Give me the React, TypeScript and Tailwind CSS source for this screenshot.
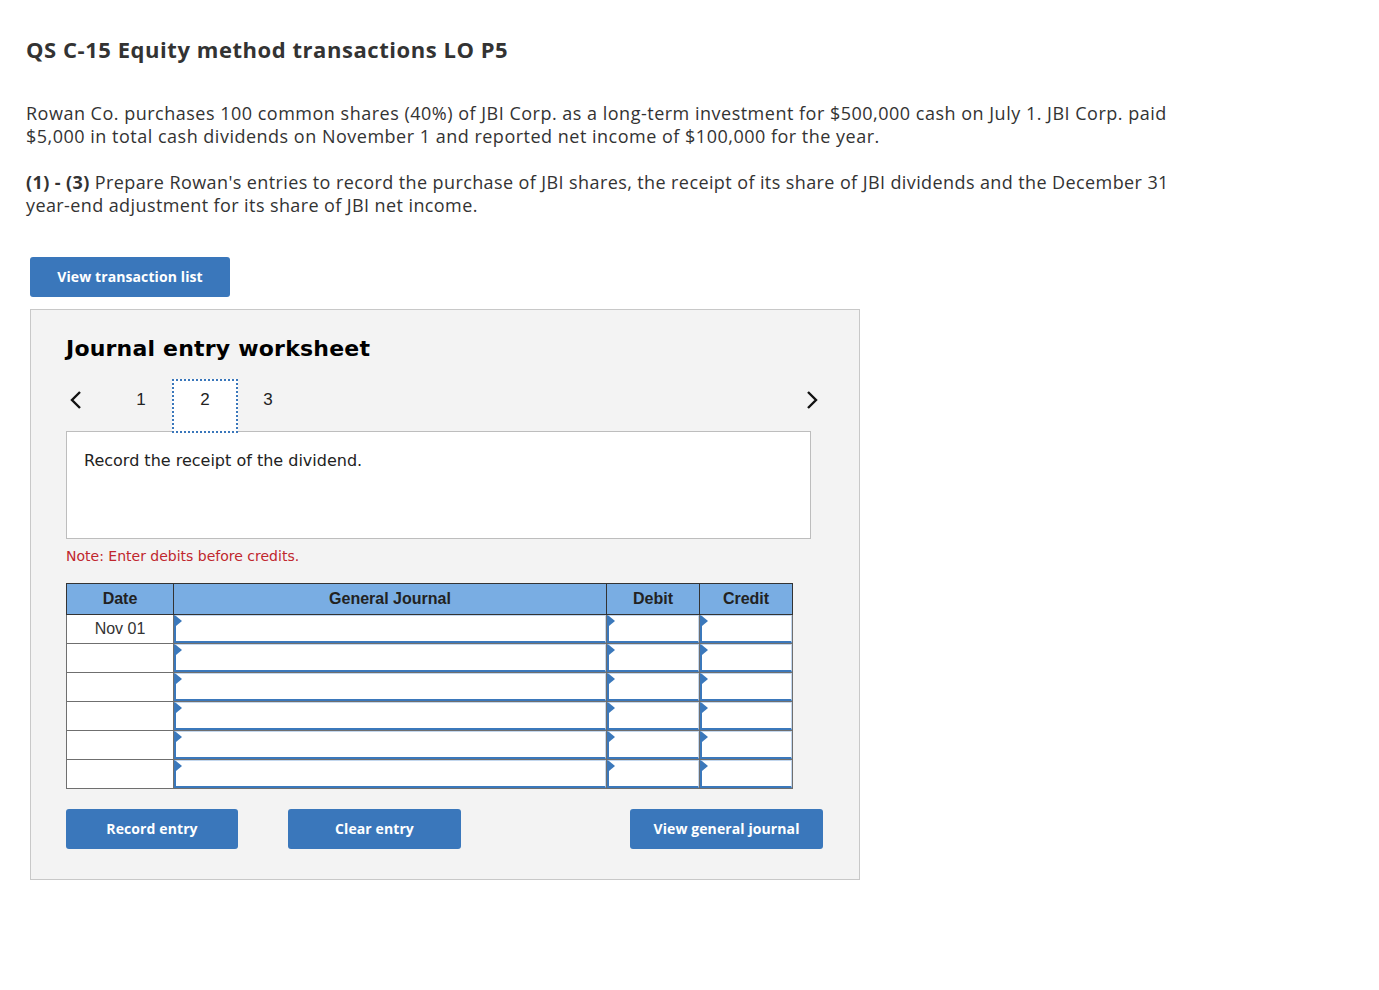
import React from "react";

const rows = ["Nov 01", "", "", "", "", ""];

function InputCell({ w }: { w: string }) {
  return (
    <td className={`${w} border border-[#6f6f6f] p-0 h-[29px] bg-white`}>
      <div className="relative h-full w-full border-l-2 border-b-2 border-[#3b78bb] border-t border-r border-t-[#c3d7ee] border-r-[#c3d7ee] bg-white">
        <span className="absolute left-0 top-0 w-0 h-0 border-t-[5px] border-b-[5px] border-l-[6px] border-t-transparent border-b-transparent border-l-[#3b78bb]" />
      </div>
    </td>
  );
}

export default function App() {
  return (
    <div className="bg-white min-h-[990px] w-[1379px] text-[#222]">
      <div className="pl-[26px] pt-[35px]">
        <h1 className="text-[22px] leading-[28px] font-bold text-[#333] font-['Open_Sans',sans-serif] tracking-[0.55px]">
          QS C-15 Equity method transactions LO P5
        </h1>
        <p className="mt-[39px] text-[18px] leading-[23px] text-[#333] font-['Open_Sans',sans-serif] tracking-[0.5px] w-[1300px]">
          Rowan Co. purchases 100 common shares (40%) of JBI Corp. as a long-term investment for $500,000 cash on July 1. JBI Corp. paid
          <br />
          $5,000 in total cash dividends on November 1 and reported net income of $100,000 for the year.
        </p>
        <p className="mt-[23px] text-[18px] leading-[23px] text-[#333] font-['Open_Sans',sans-serif] tracking-[0.4px] w-[1300px]">
          <span className="font-bold">(1) - (3)</span> Prepare Rowan's entries to record the purchase of JBI shares, the receipt of its share of JBI dividends and the December 31
          <br />
          year-end adjustment for its share of JBI net income.
        </p>
      </div>

      <div className="pl-[30px]">
        <button className="mt-[40px] w-[200px] h-[40px] rounded-[3px] bg-[#3a77bb] text-white text-[14px] leading-[20px] pb-[1px] font-bold font-['Open_Sans',sans-serif] tracking-[0.1px]">
          View transaction list
        </button>

        <div className="mt-[12px] w-[830px] h-[571px] bg-[#f3f3f3] border border-[#c8c8c8] pl-[35px] pt-[25px]">
          <h2 className="text-[22px] leading-[28px] font-bold text-black font-['DejaVu_Sans',sans-serif] tracking-[0.2px]">
            Journal entry worksheet
          </h2>

          <div className="mt-[16px] flex items-start w-[745px] h-[54px] relative z-10 font-['Liberation_Sans',sans-serif] text-[17px] leading-[22px] text-[#222]">
            <svg width="14" height="22" viewBox="0 0 14 22" className="ml-[3px] mt-[10px]">
              <path d="M11 3 L3 11 L11 19" stroke="#111" strokeWidth="2.4" fill="none" />
            </svg>
            <span className="ml-[48px] mt-[10px] w-[20px] text-center">1</span>
            <div className="ml-[21px] w-[66px] h-[54px] bg-white border-2 border-dotted border-[#3a77bb] flex justify-center pt-[8px]">
              2
            </div>
            <span className="ml-[20px] mt-[10px] w-[20px] text-center">3</span>
            <svg width="14" height="22" viewBox="0 0 14 22" className="ml-auto mr-[-8px] mt-[10px]">
              <path d="M3 3 L11 11 L3 19" stroke="#111" strokeWidth="2.4" fill="none" />
            </svg>
          </div>

          <div className="mt-[-2px] w-[745px] h-[108px] bg-white border border-[#bdbdbd] pl-[17px] pt-[19px] text-[16px] leading-[20px] font-['DejaVu_Sans',sans-serif] text-[#222]">
            Record the receipt of the dividend.
          </div>

          <p className="mt-[8px] text-[14px] leading-[18px] text-[#c0262d] font-['DejaVu_Sans',sans-serif]">
            Note: Enter debits before credits.
          </p>

          <table className="mt-[18px] border-collapse font-['Liberation_Sans',sans-serif] text-[16px]">
            <thead>
              <tr className="bg-[#79ade3] h-[31px]">
                <th className="w-[107px] border border-[#333] font-bold text-[#222] p-0">Date</th>
                <th className="w-[433px] border border-[#333] font-bold text-[#222] p-0">General Journal</th>
                <th className="w-[93px] border border-[#333] font-bold text-[#222] p-0">Debit</th>
                <th className="w-[93px] border border-[#333] font-bold text-[#222] p-0">Credit</th>
              </tr>
            </thead>
            <tbody>
              {rows.map((d, i) => (
                <tr key={i} className="h-[29px]">
                  <td className="w-[107px] border border-[#6f6f6f] bg-white text-center text-[16px] text-[#333] p-0">{d}</td>
                  <InputCell w="w-[433px]" />
                  <InputCell w="w-[93px]" />
                  <InputCell w="w-[93px]" />
                </tr>
              ))}
            </tbody>
          </table>

          <div className="mt-[20px] flex font-['Open_Sans',sans-serif] text-[14px] leading-[20px] font-bold text-white tracking-[0.1px]">
            <button className="w-[172px] h-[40px] rounded-[3px] bg-[#3a77bb] pb-[1px]">Record entry</button>
            <button className="ml-[50px] w-[173px] h-[40px] rounded-[3px] bg-[#3a77bb] pb-[1px]">Clear entry</button>
            <button className="ml-[169px] w-[193px] h-[40px] rounded-[3px] bg-[#3a77bb] pb-[1px]">View general journal</button>
          </div>
        </div>
      </div>
    </div>
  );
}
